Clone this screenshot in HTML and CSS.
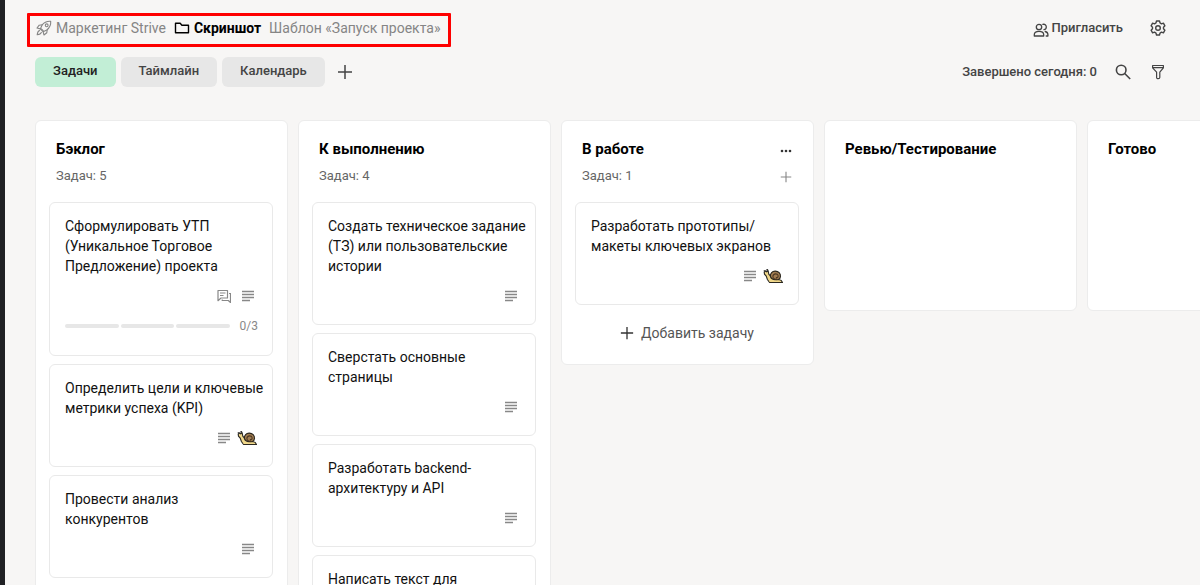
FILE: index.html
```html
<!DOCTYPE html>
<html lang="ru">
<head>
<meta charset="utf-8">
<meta name="viewport" content="width=device-width, initial-scale=1">
<title>Скриншот</title>
<link rel="stylesheet" href="styles.css">
</head>
<body>
<svg class="sprite" aria-hidden="true">
  <symbol id="lines" viewBox="0 0 14 12"><path d="M1 1.500h12M1 4.500h12M1 7.500h12M1 10.500h8" fill="none" stroke="currentColor" stroke-width="1.300"/></symbol>
  <symbol id="plus" viewBox="0 0 16 16"><path d="M8 1v14M1 8h14" fill="none" stroke="currentColor" stroke-width="1.500"/></symbol>
  <symbol id="snail" viewBox="0 0 20 16">
    <path d="M1.200 4.200 2.500 3l1.200.8L5.200 3l.6 3.200 3 3.400 9.400 2.900 1.300 2H6.600L4.400 11.500 3.200 8 1.500 6.200z" fill="#f0d78a" stroke="#2b2820" stroke-width="1.100"/>
    <path d="M2 4 1.300 2.200M4.500 3.500 4.200 1" stroke="#3b3a38" stroke-width="1.700" fill="none"/>
    <path d="M7.400 8.500c-.4-3.300 2-5.500 4.900-5.400 3.200.1 5.400 2.300 5.200 5.300-.1 1.600-1 2.700-2.200 3.400-3.800.3-7.100-.5-7.900-3.300z" fill="#a17c50" stroke="#2b2820" stroke-width="1.100"/>
    <path d="M14.200 11c-2.800.7-4.400-.8-4.300-2.600.1-1.600 1.500-2.700 3-2.500 1.500.1 2.400 1.300 2.200 2.500-.2 1.100-1.300 1.400-2.100 1" fill="none" stroke="#4b3723" stroke-width="1.100"/>
    <path d="M6.500 13.200h11" stroke="#f0d78a" stroke-width="1.200"/>
  </symbol>
</svg>
<div class="app">
  <aside class="rail"></aside>
  <main class="page">
    <header class="topbar">
      <nav class="crumbs" aria-label="Путь">
        <a class="crumb" href="#">
          <svg class="icon-rocket" viewBox="0 0 16 16" fill="none" stroke="currentColor" stroke-width="1.100" stroke-linejoin="round" stroke-linecap="round"><path d="M14.700 1.300C11 1 8.200 2.300 6 5.200L4.300 8.900l2.800 2.800 3.700-1.700c2.900-2.200 4.200-5 3.900-8.700z"/><circle cx="10.700" cy="5.300" r="1.400"/><path d="M6.300 4.800 3.200 5.200 1 8l3.300.9M11.200 9.700l-.4 3.100L8 15l-.9-3.300M3.600 10.600C1.900 11.200 1.400 12.800 1.200 14.800c2-.2 3.600-.7 4.200-2.400M5.300 8.800l1.900 1.900"/></svg>
          <span>Маркетинг Strive</span>
        </a>
        <a class="crumb crumb-current" href="#" aria-current="page">
          <svg class="icon-folder" viewBox="0 0 16 16" fill="none" stroke="currentColor" stroke-width="1.400" stroke-linejoin="round"><path d="M1.500 3.300h4.700l1.700 1.900h6.600v7.500h-13z"/></svg>
          <span>Скриншот</span>
        </a>
        <span class="crumb">Шаблон «Запуск проекта»</span>
      </nav>
      <div class="actions">
        <button class="invite" type="button">
          <svg class="icon-people" viewBox="0 0 16 16" fill="none" stroke="currentColor" stroke-width="1.300" stroke-linecap="round" stroke-linejoin="round"><circle cx="6" cy="5" r="2.700"/><path d="M1.300 14v-1.300c0-2.400 2-3.300 4.700-3.300s4.700.9 4.700 3.300V14zM9.800 2.400c1.900-.6 3.500.7 3.500 2.600 0 1.400-.9 2.500-2.300 2.700M12.200 9.500c1.700.4 2.700 1.500 2.700 3.100V14h-1.700"/></svg>
          <span>Пригласить</span>
        </button>
        <button class="icon-button" type="button" aria-label="Настройки">
          <svg viewBox="0 0 16 16" fill="none" stroke="currentColor" stroke-width="1.400" stroke-linejoin="round"><path d="M6.500 1h3l.5 1.900 1.500.9 1.900-.6 1.500 2.600L13.500 7.200v1.600l1.400 1.400-1.500 2.600-1.900-.6-1.500.9-.5 1.900h-3L6 13.100l-1.500-.9-1.900.6-1.500-2.600 1.400-1.400V7.200L1.100 5.800l1.500-2.600 1.900.6L6 2.900z"/><circle cx="8" cy="8" r="2.300"/></svg>
        </button>
      </div>
    </header>
    <div class="toolbar">
      <div class="tabs">
        <button class="tab tab-active" type="button">Задачи</button>
        <button class="tab" type="button">Таймлайн</button>
        <button class="tab" type="button">Календарь</button>
        <button class="icon-button add-tab" type="button" aria-label="Добавить вкладку"><svg><use href="#plus"/></svg></button>
      </div>
      <div class="actions">
        <span>Завершено сегодня: 0</span>
        <button class="icon-button" type="button" aria-label="Поиск">
          <svg viewBox="0 0 16 16" fill="none" stroke="currentColor" stroke-width="1.600"><circle cx="6.200" cy="6" r="4.800"/><path d="m9.700 9.500 5.500 5.500"/></svg>
        </button>
        <button class="icon-button" type="button" aria-label="Фильтр">
          <svg viewBox="0 0 16 16" fill="none" stroke="currentColor" stroke-width="1.200" stroke-linejoin="round"><path d="M2.600 1.500h10.800v2.300L9.800 8.200v5.300c0 1.600-3.200 1.600-3.200 0V8.200L2.600 3.800zM2.600 3.700h10.800"/></svg>
        </button>
      </div>
    </div>
    <div class="board">
      <section class="column">
        <header class="column-head"><div><h2>Бэклог</h2><p>Задач: 5</p></div></header>
        <div class="cards">
          <article class="card">
            <h3>Сформулировать УТП (Уникальное Торговое Предложение) проекта</h3>
            <div class="meta">
              <svg class="icon-chat" viewBox="0 0 14 14" fill="none" stroke="currentColor" stroke-width="1.200" stroke-linejoin="round"><path d="M1 1.500h9.500v7.500H4l-3 2.700zM3 4h5.500M3 6.500h3.500M12 4.500h1.500v9l-2.200-2H5.200v-1"/></svg>
              <svg class="icon-lines"><use href="#lines"/></svg>
            </div>
            <div class="progress"><i></i><i></i><i></i><span>0/3</span></div>
          </article>
          <article class="card">
            <h3>Определить цели и ключевые метрики успеха (KPI)</h3>
            <div class="meta meta-avatar"><svg class="icon-lines"><use href="#lines"/></svg><svg class="snail"><use href="#snail"/></svg></div>
          </article>
          <article class="card">
            <h3>Провести анализ<br>конкурентов</h3>
            <div class="meta"><svg class="icon-lines"><use href="#lines"/></svg></div>
          </article>
        </div>
      </section>
      <section class="column">
        <header class="column-head"><div><h2>К выполнению</h2><p>Задач: 4</p></div></header>
        <div class="cards">
          <article class="card">
            <h3>Создать техническое задание (ТЗ) или пользовательские истории</h3>
            <div class="meta"><svg class="icon-lines"><use href="#lines"/></svg></div>
          </article>
          <article class="card">
            <h3>Сверстать основные<br>страницы</h3>
            <div class="meta"><svg class="icon-lines"><use href="#lines"/></svg></div>
          </article>
          <article class="card">
            <h3>Разработать backend-<br>архитектуру и API</h3>
            <div class="meta"><svg class="icon-lines"><use href="#lines"/></svg></div>
          </article>
          <article class="card">
            <h3>Написать текст для</h3>
            <div class="meta"><svg class="icon-lines"><use href="#lines"/></svg></div>
          </article>
        </div>
      </section>
      <section class="column">
        <header class="column-head">
          <div><h2>В работе</h2><p>Задач: 1</p></div>
          <div class="column-tools">
            <button type="button" aria-label="Меню колонки"><svg viewBox="0 0 12 12" fill="currentColor"><circle cx="2" cy="6" r="1.300"/><circle cx="6" cy="6" r="1.300"/><circle cx="10" cy="6" r="1.300"/></svg></button>
            <button class="muted" type="button" aria-label="Добавить"><svg><use href="#plus"/></svg></button>
          </div>
        </header>
        <div class="cards">
          <article class="card">
            <h3>Разработать прототипы/<wbr>макеты ключевых экранов</h3>
            <div class="meta meta-avatar"><svg class="icon-lines"><use href="#lines"/></svg><svg class="snail"><use href="#snail"/></svg></div>
          </article>
        </div>
        <button class="add-task" type="button"><svg><use href="#plus"/></svg><span>Добавить задачу</span></button>
      </section>
      <section class="column">
        <header class="column-head"><div><h2>Ревью/Тестирование</h2></div></header>
      </section>
      <section class="column">
        <header class="column-head"><div><h2>Готово</h2></div></header>
      </section>
    </div>
  </main>
</div>
</body>
</html>
```
FILE: styles.css
```css
* { box-sizing: border-box; }
body {
  margin: 0;
  background: #f7f6f5;
  color: #111;
  font: 14px/20px Roboto, "Noto Sans", sans-serif;
}
h2, h3, p { margin: 0; }
button {
  padding: 0;
  border: 0;
  background: none;
  color: inherit;
  font: inherit;
  cursor: pointer;
}
a { color: inherit; text-decoration: none; }
svg { display: block; flex: none; }
.sprite { width: 0; height: 0; position: absolute; }

.app { display: flex; height: 100vh; overflow: hidden; }
.rail { flex: none; width: 5px; background: #202124; }
.page { flex: 1; min-width: 0; padding: 13px 0 0 22px; }

.topbar, .toolbar {
  display: flex;
  align-items: center;
  justify-content: space-between;
  padding-right: 33px;
  color: #444;
}
.crumbs {
  display: flex;
  align-items: center;
  gap: 8px;
  height: 34px;
  padding: 0 8px 4px 6px;
  border: 3px solid #fe0000;
  border-radius: 1px;
}
.crumb { display: flex; align-items: center; gap: 4px; color: #858585; }
.crumb-current { color: #000; font-weight: 700; }
.icon-rocket, .icon-folder, .icon-people { width: 16px; height: 16px; }
.actions { display: flex; align-items: center; gap: 17px; font-size: 13px; font-weight: 500; }
.topbar .actions { gap: 26px; align-items: flex-start; }
.invite { display: flex; align-items: center; gap: 3px; }
.invite span { padding-bottom: 4px; }
.topbar .icon-button { margin-top: 1px; }
.icon-button { display: flex; align-items: center; justify-content: center; width: 18px; height: 18px; }
.icon-button svg { width: 16px; height: 16px; }

.toolbar { margin-top: 10px; padding-left: 8px; }
.tabs { display: flex; align-items: center; gap: 5px; }
.tab {
  height: 30px;
  padding: 0 18px 2px;
  border-radius: 6px;
  background: #e7e7e7;
  color: #444;
  font-size: 13px;
  font-weight: 500;
}
.tab-active { background: #c2eed6; color: #222; }
.add-tab { margin-left: 6px; }

.board { display: flex; align-items: flex-start; gap: 10px; margin-top: 33px; padding-left: 8px; }
.column {
  flex: none;
  width: 253px;
  min-height: 191px;
  padding: 18px 14px 13px 13px;
  border: 1px solid #ececec;
  border-radius: 6px;
  background: #fff;
}
.column-head { display: flex; justify-content: space-between; min-height: 63px; padding: 0 7px; }
.column h2 { font-size: 15px; line-height: 20px; font-weight: 700; color: #000; }
.column-head p { margin-top: 7px; font-size: 13px; color: #666; }
.column-tools { display: flex; flex-direction: column; gap: 14px; padding-top: 6px; color: #333; }
.column-tools svg { width: 12px; height: 12px; }
.muted svg { color: #888; }

.cards { display: flex; flex-direction: column; gap: 8px; }
.card {
  padding: 13px 7px 20px 15px;
  border: 1px solid #e9e9e9;
  border-radius: 6px;
}
.card h3 { font-size: 14px; line-height: 20px; font-weight: 400; }
.meta {
  display: flex;
  align-items: center;
  justify-content: flex-end;
  gap: 10px;
  height: 16px;
  margin-top: 12px;
  padding-right: 10px;
  color: #888;
}
.meta-avatar { gap: 6px; padding-right: 8px; }
.icon-lines { width: 14px; height: 12px; }
.icon-chat { width: 14px; height: 14px; }
.snail { width: 20px; height: 16px; }
.progress { display: flex; align-items: center; gap: 2px; height: 18px; margin-top: 13px; padding-right: 7px; font-size: 12px; color: #888; }
.progress i { flex: 1; height: 4px; border-radius: 2px; background: #e7e7e7; }
.progress span { margin-left: 8px; }

.add-task {
  display: flex;
  align-items: center;
  justify-content: center;
  gap: 7px;
  width: 100%;
  margin-top: 18px;
  padding-bottom: 8px;
  color: #555;
}
.add-task svg { width: 14px; height: 14px; color: #333; }
```
